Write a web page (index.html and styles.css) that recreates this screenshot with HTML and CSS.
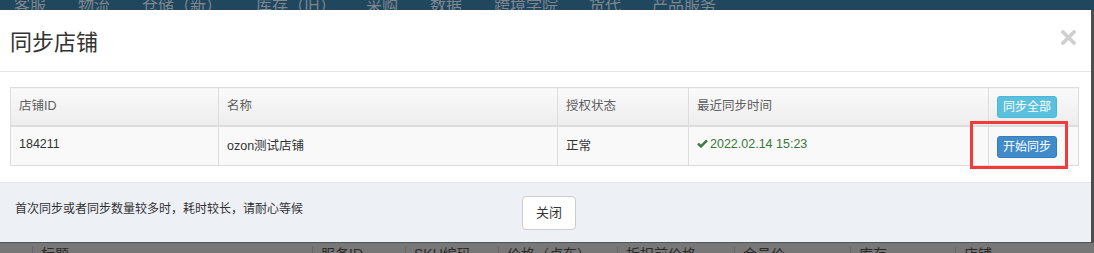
FILE: index.html
```html
<!DOCTYPE html>
<html lang="zh-CN">

<head>
    <meta charset="UTF-8" />
    <meta name="viewport" content="width=device-width, initial-scale=1.0" />
    <link rel="stylesheet" href="styles.css">
</head>

<body>
    <!-- page behind the dialog (dimmed) -->
    <div class="topnav">
        <span class="nav-item w1">客服</span>
        <span class="nav-item w1">物流</span>
        <span class="nav-item w2">仓储（新）</span>
        <span class="nav-item w3">库存（旧）</span>
        <span class="nav-item w4">采购</span>
        <span class="nav-item w4">数据</span>
        <span class="nav-item w5">跨境学院</span>
        <span class="nav-item w6">货代</span>
        <span class="nav-item">产品服务</span>
    </div>

    <div class="middle">
        <div class="modal">
            <div class="modal-header">
                <h4 class="modal-title">同步店铺</h4>
                <span class="close">
                    <svg width="15" height="15" viewBox="0 0 15 15">
                        <path d="M2 2 L13 13 M13 2 L2 13" stroke="#cfcfcf" stroke-width="3.6" stroke-linecap="square" />
                    </svg>
                </span>
            </div>

            <div class="modal-body">
                <table class="shop-table">
                    <colgroup>
                        <col style="width:208px">
                        <col style="width:339px">
                        <col style="width:131px">
                        <col style="width:300px">
                        <col style="width:90px">
                    </colgroup>
                    <thead>
                        <tr>
                            <th>店铺ID</th>
                            <th>名称</th>
                            <th>授权状态</th>
                            <th>最近同步时间</th>
                            <th class="act"><button class="btn btn-info">同步全部</button></th>
                        </tr>
                    </thead>
                    <tbody>
                        <tr>
                            <td>184211</td>
                            <td>ozon测试店铺</td>
                            <td>正常</td>
                            <td class="text-success">
                                <svg class="ok" width="11" height="9" viewBox="0 0 11 9">
                                    <path d="M1 4.6 L4 7.4 L10 1.4" fill="none" stroke="#3c763d" stroke-width="2.4" />
                                </svg>2022.02.14 15:23
                            </td>
                            <td class="act">
                                <div class="mark-wrap">
                                    <button class="btn btn-primary">开始同步</button>
                                    <span class="mark"></span>
                                </div>
                            </td>
                        </tr>
                    </tbody>
                </table>
            </div>

            <div class="modal-footer">
                <span class="tip">首次同步或者同步数量较多时，耗时较长，请耐心等候</span>
                <button class="btn btn-default">关闭</button>
            </div>
        </div>
        <div class="edge"></div>
    </div>

    <div class="page-head">
        <span class="ph c0"></span>
        <span class="ph c1">标题</span>
        <span class="ph c2">服务ID</span>
        <span class="ph c3">SKU编码</span>
        <span class="ph c4">价格（卢布）</span>
        <span class="ph c5">折扣前价格</span>
        <span class="ph c6">会员价</span>
        <span class="ph c7">库存</span>
        <span class="ph c8">店铺</span>
    </div>
</body>

</html>
```

FILE: styles.css
```css
body {
    margin: 0;
    width: 1094px;
    height: 253px;
    overflow: hidden;
    font-family: 'Liberation Sans', 'Noto Sans CJK SC', sans-serif;
    color: #333;
    background-color: #777;
}

/* dimmed top navigation */
.topnav {
    height: 10px;
    overflow: hidden;
    background-color: #21475f;
    padding-left: 14px;
    display: flex;
    white-space: nowrap;
}

.nav-item {
    font-size: 16px;
    line-height: 16px;
    margin-top: -2px;
    color: #7d8890;
}

.w1 { width: 64px; }
.w2 { width: 114px; }
.w3 { width: 110px; }
.w4 { width: 64px; }
.w5 { width: 95px; }
.w6 { width: 63px; }

.middle {
    display: flex;
    height: 233px;
}

.edge {
    flex: 1;
    background-color: #4e4e4e;
}

/* dialog */
.modal {
    width: 1091px;
    display: flex;
    flex-direction: column;
    background-color: #fff;
    border-bottom: 1px solid #555;
}

.modal-header {
    height: 62px;
    padding: 0 15px 2px 10px;
    box-sizing: border-box;
    border-bottom: 1px solid #e5e5e5;
    display: flex;
    align-items: center;
    justify-content: space-between;
}

.modal-title {
    margin: 0;
    font-size: 22px;
    font-weight: normal;
    color: #333;
}

.close {
    display: flex;
    margin-top: -4px;
}

.modal-body {
    padding: 15px 13px 16px 10px;
}

.shop-table {
    width: 1068px;
    table-layout: fixed;
    border-collapse: collapse;
    font-size: 12.5px;
}

.shop-table th,
.shop-table td {
    border: 1px solid #ddd;
    text-align: left;
    padding: 0 8px 4px 8px;
}

.shop-table th.act,
.shop-table td.act {
    padding-bottom: 0;
}

.shop-table th {
    height: 33px;
    font-weight: normal;
    color: #5e5e5e;
    background-image: linear-gradient(#fafafa, #ededed);
    border-bottom: 2px solid #ddd;
}

.shop-table td {
    height: 34px;
    background-color: #f9f9f9;
    color: #333;
}

.shop-table th.act {
    height: 37px;
}

.shop-table td.act {
    height: 37px;
    padding-top: 1px;
}

.text-success {
    color: #3c763d !important;
}

.ok {
    margin-right: 2px;
}

.btn {
    font-family: 'Liberation Sans', 'Noto Sans CJK SC', sans-serif;
    font-size: 12px;
    line-height: 20px;
    padding: 0 5px;
    border-radius: 3px;
    border: 1px solid transparent;
    color: #fff;
    cursor: pointer;
}

.btn-info {
    background-color: #5bc0de;
    border-color: #46b8da;
}

.btn-primary {
    background-color: #428bca;
    border-color: #357ebd;
}

.mark-wrap {
    position: relative;
    display: inline-block;
    vertical-align: middle;
}

.mark-wrap .btn {
    display: block;
}

/* red annotation box around the button */
.mark {
    position: absolute;
    left: -27px;
    right: -11px;
    top: -15px;
    bottom: -11px;
    border: 3px solid #f33a3a;
}

.modal-footer {
    flex: 1;
    background-color: #edf0f5;
    border-top: 1px solid #e5e5e5;
    display: flex;
    align-items: center;
    padding-left: 15px;
}

.tip {
    font-size: 12px;
    width: 507px;
    margin-top: -10px;
}

.btn-default {
    color: #333;
    background-color: #fff;
    border-color: #ccc;
    border-radius: 4px;
    font-size: 13px;
    height: 34px;
    width: 54px;
    padding: 0;
}

/* dimmed list header below */
.page-head {
    display: flex;
    height: 10px;
    overflow: hidden;
    white-space: nowrap;
}

.ph {
    box-sizing: border-box;
    border-left: 1px solid #666;
    padding-left: 8px;
    font-size: 14px;
    line-height: 14px;
    margin-top: 4px;
    color: #2a2a2a;
}

.c0 { width: 32px; border-left: none; }
.c1 { width: 280px; }
.c2 { width: 93px; }
.c3 { width: 93px; }
.c4 { width: 119px; }
.c5 { width: 117px; }
.c6 { width: 116px; }
.c7 { width: 105px; }
.c8 { flex: 1; }
```
